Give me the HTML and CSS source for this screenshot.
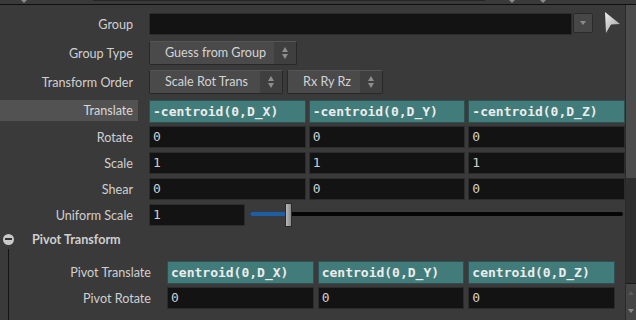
FILE: index.html
```html
<!DOCTYPE html>
<html lang="en">
<head>
    <meta charset="UTF-8">
    <title>Transform Parameters</title>
    <link rel="stylesheet" href="styles.css">
</head>
<body>
    <div class="topbar">
        <span class="tiny-tri tri-a"></span>
        <div class="tabstrip"></div>
        <span class="tiny-tri tri-b"></span>
        <span class="tiny-tri tri-c"></span>
    </div>
    <div class="pane">
        <div class="params">
            <!-- group -->
            <div class="row row-group">
                <div class="lbl">Group</div>
                <div class="field group-field"></div>
                <div class="drop-btn"><span class="tri-down"></span></div>
                <svg class="pick-icon" width="17" height="22" viewBox="0 0 17 22">
                    <defs>
                        <linearGradient id="pick" x1="0" y1="0" x2="1" y2="1">
                            <stop offset="0" stop-color="#f0f0f0"/>
                            <stop offset="1" stop-color="#9a9a9a"/>
                        </linearGradient>
                    </defs>
                    <polygon points="1,0 16,12 7,12.5 2,21" fill="url(#pick)"/>
                </svg>
            </div>
            <div class="row row-btn">
                <div class="lbl">Group Type</div>
                <div class="menu-btn w-grouptype">
                    <span class="menu-text">Guess from Group</span>
                    <span class="spin"><i class="up"></i><i class="down"></i></span>
                </div>
            </div>
            <div class="row row-btn row-order">
                <div class="lbl">Transform Order</div>
                <div class="menu-btn w-order">
                    <span class="menu-text">Scale Rot Trans</span>
                    <span class="spin"><i class="up"></i><i class="down"></i></span>
                </div>
                <div class="menu-btn w-rot">
                    <span class="menu-text">Rx Ry Rz</span>
                    <span class="spin"><i class="up"></i><i class="down"></i></span>
                </div>
            </div>

            <div class="vec-rows">
                <div class="row">
                    <div class="lbl lbl-hot">Translate</div>
                    <div class="vec">
                        <div class="field expr">-centroid(0,D_X)</div>
                        <div class="field expr">-centroid(0,D_Y)</div>
                        <div class="field expr">-centroid(0,D_Z)</div>
                    </div>
                </div>
                <div class="row">
                    <div class="lbl">Rotate</div>
                    <div class="vec">
                        <div class="field">0</div>
                        <div class="field">0</div>
                        <div class="field">0</div>
                    </div>
                </div>
                <div class="row">
                    <div class="lbl">Scale</div>
                    <div class="vec">
                        <div class="field">1</div>
                        <div class="field">1</div>
                        <div class="field">1</div>
                    </div>
                </div>
                <div class="row">
                    <div class="lbl">Shear</div>
                    <div class="vec">
                        <div class="field">0</div>
                        <div class="field">0</div>
                        <div class="field">0</div>
                    </div>
                </div>
                <div class="row">
                    <div class="lbl">Uniform Scale</div>
                    <div class="field uni-field">1</div>
                    <div class="slider">
                        <div class="track"><div class="fill"></div></div>
                        <div class="knob"></div>
                    </div>
                </div>
            </div>

            <div class="folder">
                <span class="fold-icon"></span>
                <span class="fold-title">Pivot Transform</span>
            </div>
            <div class="folder-body">
                <div class="row">
                    <div class="lbl lbl-pivot">Pivot Translate</div>
                    <div class="vec">
                        <div class="field expr">centroid(0,D_X)</div>
                        <div class="field expr">centroid(0,D_Y)</div>
                        <div class="field expr">centroid(0,D_Z)</div>
                    </div>
                </div>
                <div class="row">
                    <div class="lbl lbl-pivot">Pivot Rotate</div>
                    <div class="vec">
                        <div class="field">0</div>
                        <div class="field">0</div>
                        <div class="field">0</div>
                    </div>
                </div>
            </div>
        </div>

        <div class="scrollbar">
            <div class="thumb"><span class="grip"></span></div>
            <div class="track-rest"></div>
            <div class="arrow-btn"><span class="s-up"></span></div>
            <div class="arrow-btn"><span class="s-down"></span></div>
        </div>
    </div>
</body>
</html>
```

FILE: styles.css
```css
body {
    margin: 0;
    width: 636px;
    height: 320px;
    overflow: hidden;
    background-color: #3a3a3a;
    font-family: 'Lato', 'Liberation Sans', sans-serif;
    font-size: 12.6px;
    color: #d0d0d0;
}

/* top strip */
.topbar {
    height: 4px;
    border-bottom: 1px solid #101010;
    display: flex;
    align-items: flex-start;
}
.tabstrip {
    width: 392px;
    height: 1px;
    background-color: #262626;
    margin-left: 66px;
}
.tiny-tri {
    width: 0;
    height: 0;
    border-left: 3px solid transparent;
    border-right: 3px solid transparent;
    border-top: 3px solid #8a8a8a;
}
.tri-a { margin-left: 21px; }
.tri-b { margin-left: 24px; }
.tri-c { margin-left: 25px; }

.pane {
    display: flex;
    height: 315px;
}
.params {
    flex: 1;
    padding-top: 8px;
}

.row {
    display: flex;
    align-items: center;
    height: 22px;
}
.lbl {
    width: 133px;
    padding-right: 16px;
    text-align: right;
    white-space: nowrap;
    flex-shrink: 0;
}
.lbl-hot {
    width: 133px;
    padding-right: 5px;
    margin-right: 11px;
    height: 21px;
    line-height: 21px;
    align-self: flex-start;
    background-color: #525252;
    color: #d8d8d8;
}

.field {
    box-sizing: border-box;
    height: 22px;
    background-color: #131313;
    border: 1px solid #2c2c2c;
    font-family: 'DejaVu Sans Mono', monospace;
    font-size: 13px;
    line-height: 20px;
    padding-left: 3px;
    color: #d0d0d0;
}
.field.expr {
    background-color: #417c7a;
    border-color: #2d5150;
    color: #ececec;
    font-weight: bold;
    height: 23px;
    line-height: 21px;
}

/* group row */
.group-field {
    width: 423px;
}
.drop-btn {
    box-sizing: border-box;
    width: 20px;
    height: 20px;
    margin-left: 1px;
    align-self: flex-start;
    background-color: #474747;
    border: 1px solid #2a2a2a;
    border-radius: 2px;
    display: flex;
    justify-content: center;
    align-items: center;
}
.tri-down {
    width: 0;
    height: 0;
    border-left: 3px solid transparent;
    border-right: 3px solid transparent;
    border-top: 4px solid #8c8c8c;
}
.pick-icon {
    margin-left: 11px;
    align-self: flex-start;
    margin-top: -1px;
}

/* menu buttons */
.row-btn {
    height: 24px;
    margin-top: 6px;
}
.row-order {
    margin-top: 5px;
}
.menu-btn {
    box-sizing: border-box;
    height: 24px;
    display: flex;
    background-color: #4a4a4a;
    border: 1px solid #282828;
    border-top-color: #555;
    border-radius: 2px;
    color: #d4d4d4;
}
.menu-text {
    flex: 1;
    padding-left: 15px;
    line-height: 22px;
    white-space: nowrap;
}
.spin {
    width: 22px;
    background-color: #3f3f3f;
    display: flex;
    flex-direction: column;
    justify-content: center;
    align-items: center;
    gap: 2px;
}
.spin i {
    width: 0;
    height: 0;
    border-left: 3.5px solid transparent;
    border-right: 3.5px solid transparent;
}
.spin .up { border-bottom: 5px solid #8e8e8e; }
.spin .down { border-top: 5px solid #8e8e8e; }
.w-grouptype { width: 148px; }
.w-order { width: 134px; }
.w-rot { width: 96px; margin-left: 4px; }

/* vector rows */
.vec-rows {
    margin-top: 6px;
    display: flex;
    flex-direction: column;
    gap: 4px;
}
.vec {
    flex: 1;
    display: flex;
    gap: 3px;
}
.vec .field {
    flex: 1;
}
.uni-field {
    width: 96px;
}

.slider {
    flex: 1;
    position: relative;
    height: 22px;
    margin-left: 5px;
    margin-right: 2px;
}
.track {
    position: absolute;
    left: 0;
    right: 0;
    top: 8px;
    height: 4px;
    border-radius: 2px;
    background-color: #050505;
}
.track .fill {
    width: 36px;
    height: 4px;
    border-radius: 2px 0 0 2px;
    background-color: #1f5ea6;
}
.knob {
    position: absolute;
    left: 35px;
    top: -1px;
    width: 5px;
    height: 22px;
    background: linear-gradient(to right, #b8b8b8, #8a8a8a);
    border: 1px solid #2a2a2a;
}

/* folder */
.folder {
    display: flex;
    align-items: center;
    height: 20px;
    margin-top: 3px;
}
.fold-icon {
    width: 11px;
    height: 11px;
    border-radius: 50%;
    background-color: #c9c9c9;
    margin-left: 3px;
    display: flex;
    justify-content: center;
    align-items: center;
}
.fold-icon::after {
    content: '';
    width: 7px;
    height: 2px;
    background-color: #333;
}
.fold-title {
    margin-left: 18px;
    font-weight: bold;
    color: #d0d0d0;
}
.folder-body {
    margin-left: 8px;
    border-left: 1px solid #141414;
    padding-top: 12px;
    padding-right: 10px;
    height: 60px;
    display: flex;
    flex-direction: column;
    gap: 4px;
}
.lbl-pivot {
    width: 142px;
    padding-right: 16px;
}
.folder-body .vec {
    gap: 4px;
}

/* scrollbar */
.scrollbar {
    width: 10px;
    display: flex;
    flex-direction: column;
    border-left: 1px solid #2a2a2a;
}
.thumb {
    height: 173px;
    background-color: #4c4c4c;
    display: flex;
    justify-content: center;
    align-items: center;
}
.grip {
    width: 6px;
    height: 10px;
    background-image: radial-gradient(#111 45%, transparent 50%);
    background-size: 2px 2px;
    margin-top: 12px;
}
.track-rest {
    height: 105px;
    background-color: #2e2e2e;
    border-bottom: 1px solid #1a1a1a;
}
.arrow-btn {
    height: 18px;
    background-color: #454545;
    display: flex;
    justify-content: center;
    align-items: center;
}
.s-up {
    width: 0;
    height: 0;
    border-left: 3px solid transparent;
    border-right: 3px solid transparent;
    border-bottom: 4px solid #5a5a5a;
}
.s-down {
    width: 0;
    height: 0;
    border-left: 3px solid transparent;
    border-right: 3px solid transparent;
    border-top: 4px solid #8a8a8a;
}
```
